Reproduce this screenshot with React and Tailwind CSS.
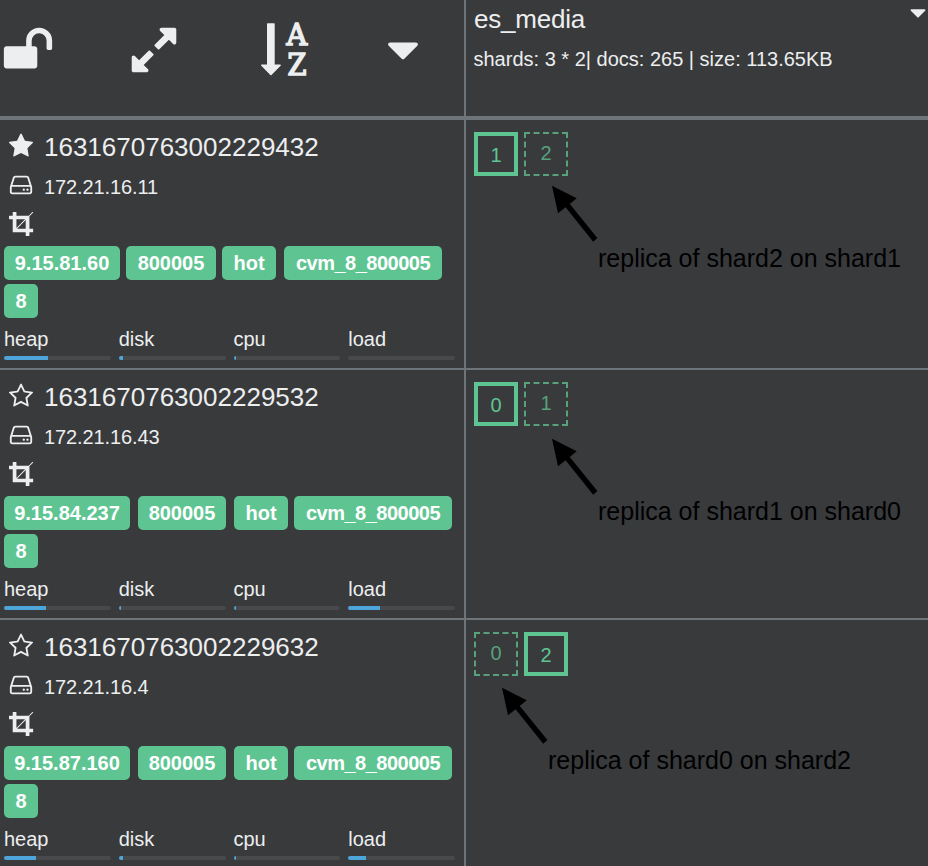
const ICONS = {
  unlock:
    "M1728 576v256q0 26-19 45t-45 19h-64q-26 0-45-19t-19-45v-256q0-106-75-181t-181-75-181 75-75 181v192h96q40 0 68 28t28 68v576q0 40-28 68t-68 28h-960q-40 0-68-28t-28-68v-576q0-40 28-68t68-28h672v-192q0-185 131.5-316.5t316.5-131.5 316.5 131.5 131.5 316.5z",
  expand:
    "M883 1056q0 13-10 23l-332 332 144 144q19 19 19 45t-19 45-45 19h-448q-26 0-45-19t-19-45v-448q0-26 19-45t45-19 45 19l144 144 332-332q10-10 23-10t23 10l114 114q10 10 10 23zm781-864v448q0 26-19 45t-45 19-45-19l-144-144-332 332q-10 10-23 10t-23-10l-114-114q-10-10-10-23t10-23l332-332-144-144q-19-19-19-45t19-45 45-19h448q26 0 45 19t19 45z",
  caret:
    "M1408 704q0 26-19 45l-448 448q-19 19-45 19t-45-19l-448-448q-19-19-19-45t19-45 45-19h896q26 0 45 19t19 45z",
  star:
    "M1728 647q0 22-26 48l-363 354 86 500q1 7 1 20 0 21-10.5 35.5t-30.5 14.5q-19 0-40-12l-449-236-449 236q-22 12-40 12-21 0-31.5-14.5t-10.5-35.5q0-6 2-20l86-500-364-354q-25-27-25-48 0-37 56-46l502-73 225-455q19-41 49-41t49 41l225 455 502 73q56 9 56 46z",
  starOutline:
    "M1201 1004l306-297-422-62-189-382-189 382-422 62 306 297-73 421 378-199 377 199zm527-357q0 22-26 48l-363 354 86 500q1 7 1 20 0 50-41 50-19 0-40-12l-449-236-449 236q-22 12-40 12-21 0-31.5-14.5t-10.5-35.5q0-6 2-20l86-500-364-354q-25-27-25-48 0-37 56-46l502-73 225-455q19-41 49-41t49 41l225 455 502 73q56 9 56 46z",
  disk:
    "M1168 1216q0 33-23.5 56.5t-56.5 23.5-56.5-23.5-23.5-56.5 23.5-56.5 56.5-23.5 56.5 23.5 23.5 56.5zm256 0q0 33-23.5 56.5t-56.5 23.5-56.5-23.5-23.5-56.5 23.5-56.5 56.5-23.5 56.5 23.5 23.5 56.5zm112 160v-320q0-13-9.5-22.5t-22.5-9.5h-1216q-13 0-22.5 9.5t-9.5 22.5v320q0 13 9.5 22.5t22.5 9.5h1216q13 0 22.5-9.5t9.5-22.5zm-1230-480h1180l-157-482q-4-13-16-21.5t-26-8.5h-782q-14 0-26 8.5t-16 21.5zm1358 160v320q0 66-47 113t-113 47h-1216q-66 0-113-47t-47-113v-320q0-25 16-75l197-606q17-53 63-86t101-33h782q55 0 101 33t63 86l197 606q16 50 16 75z",
  crop:
    "M557 1216h595v-595zm-45-45l595-595h-595v595zm1152 77v192q0 14-9 23t-23 9h-224v224q0 14-9 23t-23 9h-192q-14 0-23-9t-9-23v-224h-864q-14 0-23-9t-9-23v-864h-224q-14 0-23-9t-9-23v-192q0-14 9-23t23-9h224v-224q0-14 9-23t23-9h192q14 0 23 9t9 23v224h851l246-247q10-9 23-9t23 9q9 10 9 23t-9 23l-247 246v851h224q14 0 23 9t9 23z",
};

const NODES = [
  {
    id: "1631670763002229432",
    ip: "172.21.16.11",
    master: true,
    tags: [
      { text: "9.15.81.60", size: "w-[116px] mr-[6px]" },
      { text: "800005", size: "w-[90px] mr-[6px]" },
      { text: "hot", size: "w-[54px] mr-[8px]" },
      { text: "cvm_8_800005", size: "w-[158px] tracking-[-0.5px]" },
      { text: "8", size: "w-[34px]" },
    ],
    stats: { heap: 44, disk: 4, cpu: 2, load: 0 },
    shards: [{ n: 1, primary: true }, { n: 2 }],
    note: { text: "replica of shard2 on shard1", place: "left-[86px] top-[65px]" },
  },
  {
    id: "1631670763002229532",
    ip: "172.21.16.43",
    tags: [
      { text: "9.15.84.237", size: "w-[126px] mr-[8px]" },
      { text: "800005", size: "w-[88px] mr-[8px]" },
      { text: "hot", size: "w-[54px] mr-[6px]" },
      { text: "cvm_8_800005", size: "w-[158px] tracking-[-0.5px]" },
      { text: "8", size: "w-[34px]" },
    ],
    stats: { heap: 42, disk: 2, cpu: 2, load: 32 },
    shards: [{ n: 0, primary: true }, { n: 1 }],
    note: { text: "replica of shard1 on shard0", place: "left-[86px] top-[68px]" },
  },
  {
    id: "1631670763002229632",
    ip: "172.21.16.4",
    tags: [
      { text: "9.15.87.160", size: "w-[126px] mr-[8px]" },
      { text: "800005", size: "w-[88px] mr-[8px]" },
      { text: "hot", size: "w-[54px] mr-[6px]" },
      { text: "cvm_8_800005", size: "w-[158px] tracking-[-0.5px]" },
      { text: "8", size: "w-[34px]" },
    ],
    stats: { heap: 32, disk: 4, cpu: 2, load: 18 },
    shards: [{ n: 0 }, { n: 2, primary: true }],
    note: { text: "replica of shard0 on shard2", place: "left-[36px] top-[67px]" },
  },
];

function Icon({ name, className }) {
  return (
    <svg viewBox="0 0 1792 1792" fill="currentColor" className={className}>
      <path d={ICONS[name]} />
    </svg>
  );
}

function SortIcon() {
  return (
    <svg viewBox="0 0 52 52" fill="currentColor" className="w-[52px] h-[52px] ml-[77.7px] shrink-0 overflow-visible">
      <path d="M9 0.2Q9 -0.7 9.5 -0.7H16.2Q16.7 -0.7 16.7 0.2V40.4H22.2Q23.6 40.6 22.6 41.8L13.5 50.9Q12.9 51.5 12.3 50.9L3.3 41.8Q2.3 40.6 3.7 40.4H9Z" />
      <g stroke="currentColor" strokeWidth="1.6" fontSize="29" fontFamily="'DejaVu Serif', serif">
        <text x="28.6" y="21.2" textLength="20.6" lengthAdjust="spacingAndGlyphs">A</text>
        <text x="29.6" y="51" textLength="19" lengthAdjust="spacingAndGlyphs">Z</text>
      </g>
    </svg>
  );
}

function Stat({ label, value }) {
  return (
    <div className="pr-2">
      <div className="h-[30px] text-[20px] leading-[30px]">{label}</div>
      <div className="mt-[2px] h-1 rounded-xs bg-[#48494b] overflow-hidden">
        <div className="h-full bg-[#4ea5da]" style={{ width: value }} />
      </div>
    </div>
  );
}

function Shard({ n, primary }) {
  if (primary) {
    return (
      <div className="w-11 h-11 border-4 border-[#5ec592] text-[#5ec592] text-[20px] leading-[38px] text-center">
        {n}
      </div>
    );
  }
  return (
    <div className="w-11 h-11 border-2 border-dashed border-[#57a17c] text-[#57a17c] text-[20px] leading-[38px] text-center">
      {n}
    </div>
  );
}

function Note({ text, place }) {
  return (
    <div className={`absolute flex text-black ${place}`}>
      <svg viewBox="0 0 46 58" className="w-[46px] h-[58px]" fill="currentColor">
        <path d="M0 0.7L24.7 13.2L17.8 19L45.4 53L41.2 56.7L13.6 22.2L6 28.2Z" />
      </svg>
      <span className="mt-[59px] text-[25px] leading-[28px] whitespace-nowrap">{text}</span>
    </div>
  );
}

function NodeRow({ node }) {
  return (
    <div className="flex h-[250px] border-b-2 border-[#6e757a]">
      <div className="w-[466px] shrink-0 border-r-2 border-[#6e757a] pl-1">
        <div className="flex h-[52px]">
          <Icon name={node.master ? "star" : "starOutline"} className="w-[26px] h-[26px] ml-[3.8px] mt-[13.2px]" />
          <span className="ml-[10.2px] mt-[9px] text-[26px] leading-9">{node.id}</span>
        </div>
        <div className="flex h-[36px]">
          <Icon name="disk" className="w-[26px] h-[26px] ml-[3.8px]" />
          <span className="ml-[10.2px] text-[20px] leading-[30px] tracking-[-0.1px]">{node.ip}</span>
        </div>
        <div className="flex h-[38px]">
          <Icon name="crop" className="w-[26px] h-[26px] ml-[4.6px] mt-[2.8px]" />
        </div>
        <div className="flex flex-wrap gap-y-1 text-white">
          {node.tags.map((t) => (
            <span key={t.text} className={`h-[34px] rounded-[5px] bg-[#5ec592] text-center text-[20px] font-bold leading-[35px] ${t.size}`}>
              {t.text}
            </span>
          ))}
        </div>
        <div className="mt-[6px] grid grid-cols-4 w-[459px]">
          {Object.entries(node.stats).map(([label, value]) => (
            <Stat key={label} label={label} value={value} />
          ))}
        </div>
      </div>
      <div className="relative flex-1 flex items-start gap-[6px] pl-2 pt-3">
        {node.shards.map((s) => (
          <Shard key={s.n} n={s.n} primary={s.primary} />
        ))}
        <Note text={node.note.text} place={node.note.place} />
      </div>
    </div>
  );
}

export default function App() {
  return (
    <div className="w-[928px] h-[866px] overflow-hidden bg-[#393a3c] text-[#eceeef] font-['Liberation_Sans',Arial,sans-serif]">
      {/* Toolbar and index header */}
      <div className="flex h-[120px] border-b-4 border-[#6e757a]">
        <div className="w-[466px] shrink-0 border-r-2 border-[#6e757a] flex items-start pt-[24px] pl-[2.1px]">
          <Icon name="unlock" className="w-[52px] h-[52px] shrink-0" />
          <Icon name="expand" className="w-[52px] h-[52px] shrink-0 ml-[74.2px]" />
          <SortIcon />
          <Icon name="caret" className="w-[52px] h-[52px] shrink-0 ml-[66.9px]" />
        </div>
        <div className="flex-1 pl-2">
          <div className="flex justify-between">
            <span className="text-[26px] leading-[39px] tracking-[-0.2px]">es_media</span>
            <Icon name="caret" className="w-[26px] h-[26px] mr-[-3px]" />
          </div>
          <div className="mt-[5px] -ml-[0.5px] text-[20px] leading-[30px]">
            shards: 3 * 2| docs: 265 | size: 113.65KB
          </div>
        </div>
      </div>

      {/* Nodes */}
      {NODES.map((node) => (
        <NodeRow key={node.id} node={node} />
      ))}
    </div>
  );
}
